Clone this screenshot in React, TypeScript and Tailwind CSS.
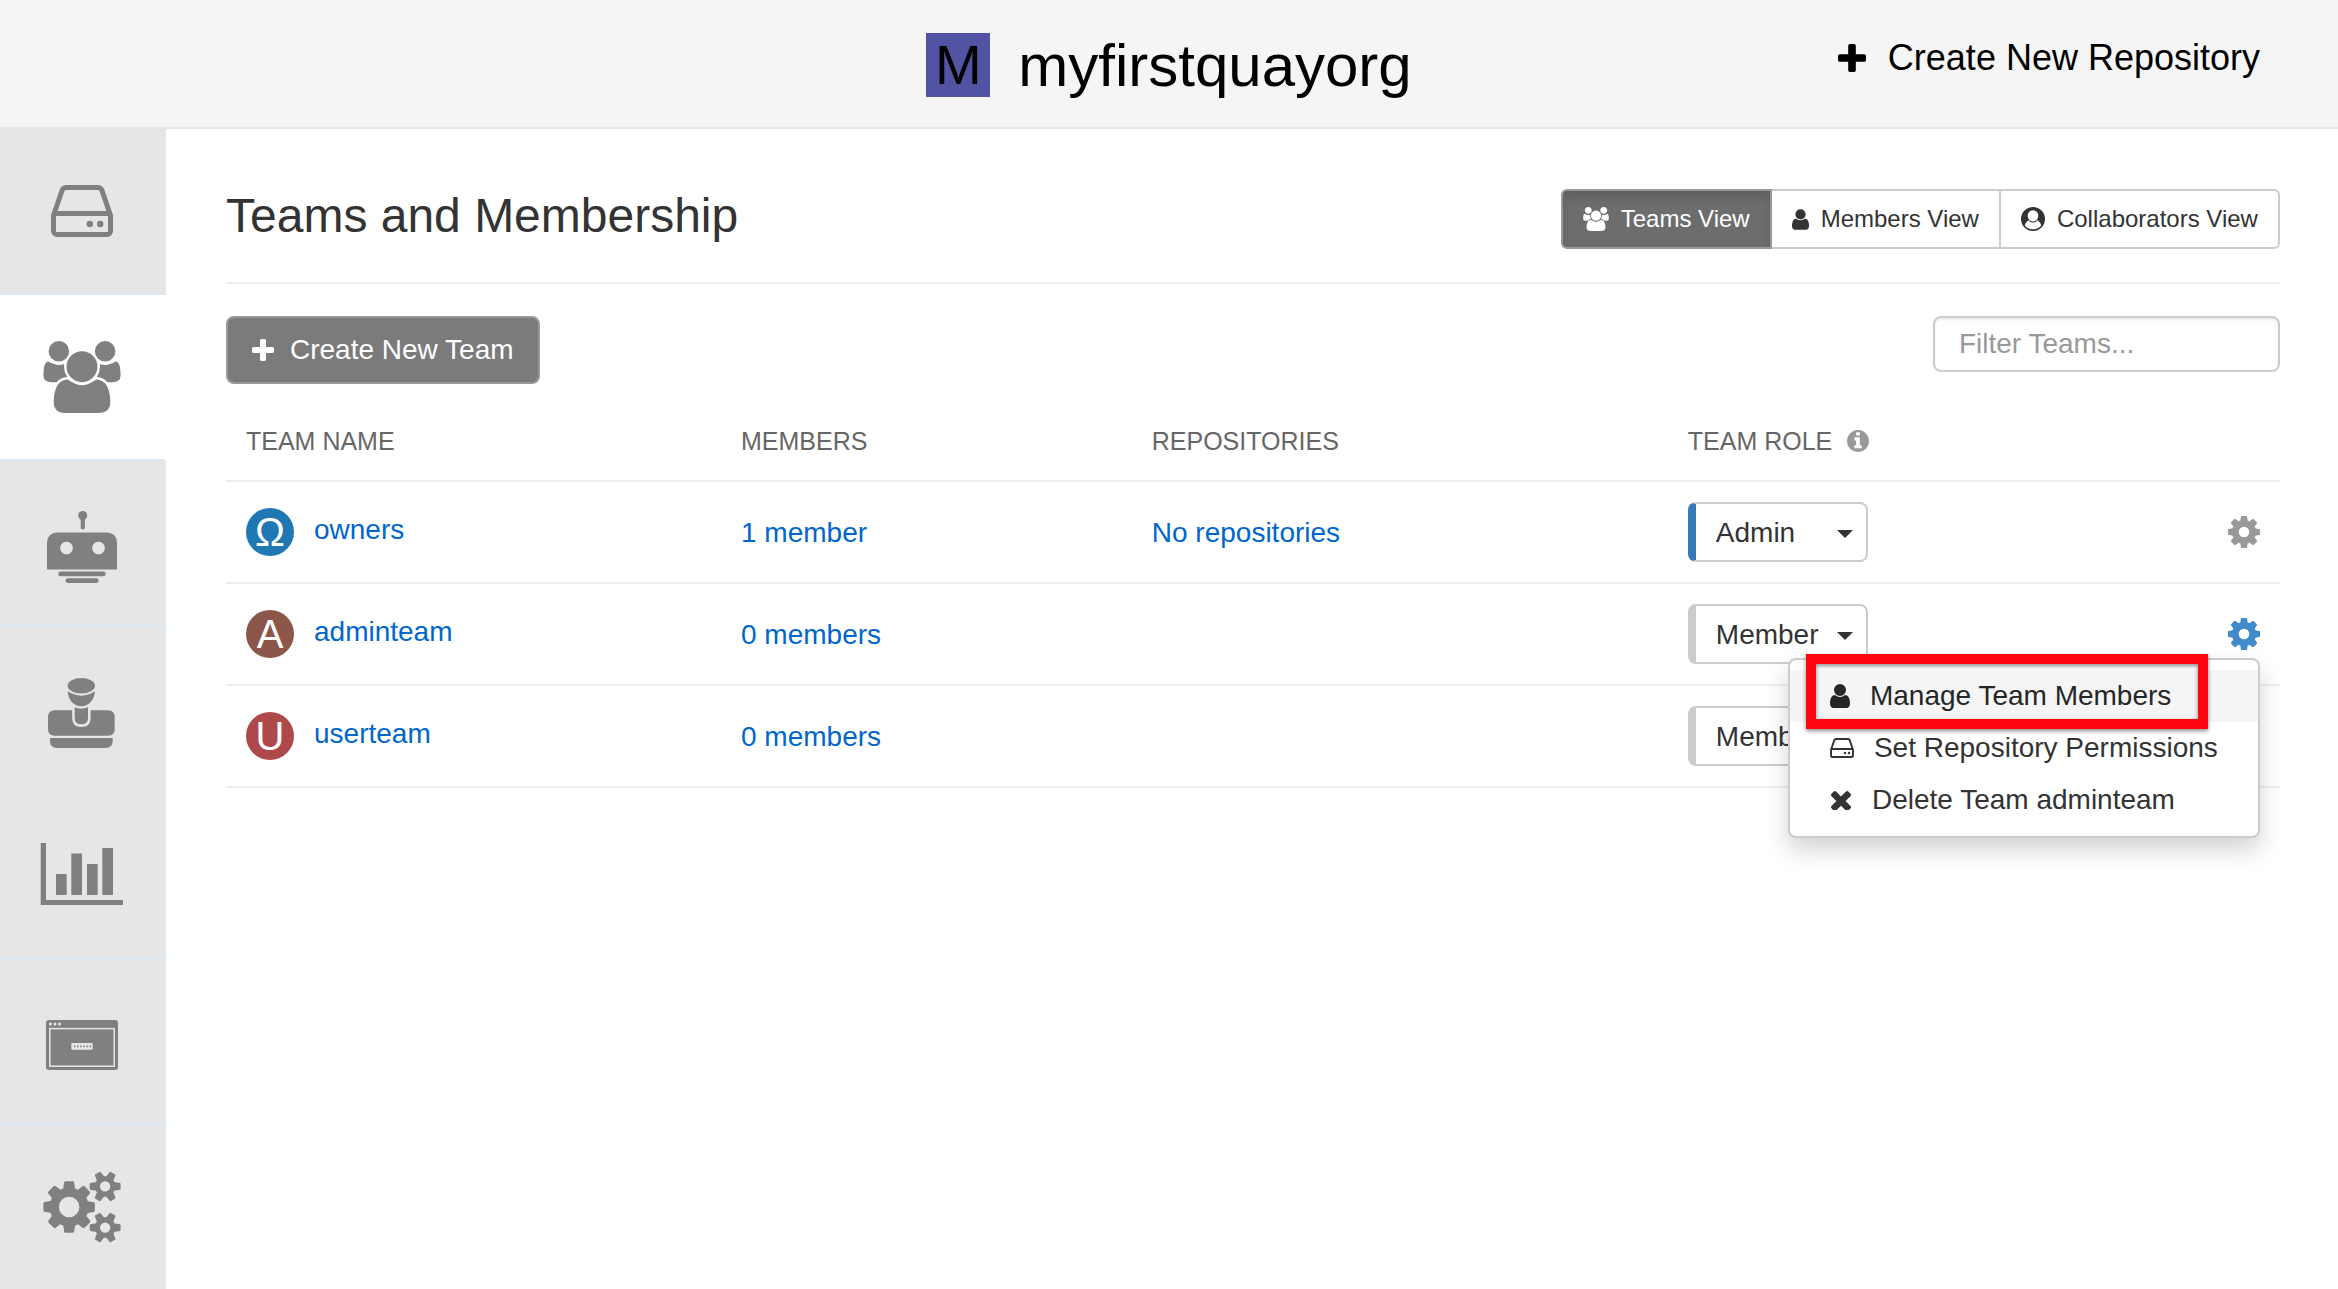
import React, { useState } from 'react';

interface IconProps {
  className?: string;
}

interface GlyphProps extends IconProps {
  viewBox: string;
  d: string;
}

const Glyph: React.FC<GlyphProps> = ({ viewBox, d, className }) => (
  <svg viewBox={viewBox} fill="currentColor" aria-hidden="true" className={className}>
    <path d={d} />
  </svg>
);

const PlusIcon: React.FC<IconProps> = ({ className }) => (
  <Glyph
    className={className}
    viewBox="192 128 1408 1408"
    d="M1600 736v192q0 40-28 68t-68 28h-416v416q0 40-28 68t-68 28h-192q-40 0-68-28t-28-68v-416h-416q-40 0-68-28t-28-68v-192q0-40 28-68t68-28h416v-416q0-40 28-68t68-28h192q40 0 68 28t28 68v416h416q40 0 68 28t28 68z"
  />
);

const GroupIcon: React.FC<IconProps> = ({ className }) => (
  <Glyph
    className={className}
    viewBox="-64 0 1920 1792"
    d="M529 896q-162 5-265 128h-134q-82 0-138-40.500t-56-118.500q0-353 124-353 6 0 43.500 21t97.500 42.500 119 21.500q67 0 133-23-5 37-5 66 0 139 81 256zm1071 637q0 120-73 189.500t-194 69.500h-874q-121 0-194-69.500t-73-189.500q0-53 3.500-103.500t14-109 26.500-108.500 43-97.500 62-81 85.500-53.500 111.500-20q10 0 43 21.500t73 48 107 48 135 21.500 135-21.500 107-48 73-48 43-21.500q61 0 111.500 20t85.500 53.500 62 81 43 97.500 26.500 108.500 14 109 3.500 103.500zm-1024-1277q0 106-75 181t-181 75-181-75-75-181 75-181 181-75 181 75 75 181zm704 384q0 159-112.500 271.500t-271.500 112.500-271.500-112.500-112.500-271.500 112.500-271.500 271.500-112.500 271.500 112.500 112.500 271.500zm576 225q0 78-56 118.500t-138 40.500h-134q-103-123-265-128 81-117 81-256 0-29-5-66 66 23 133 23 59 0 119-21.500t97.500-42.500 43.500-21q124 0 124 353zm-128-609q0 106-75 181t-181 75-181-75-75-181 75-181 181-75 181 75 75 181z"
  />
);

const UserIcon: React.FC<IconProps> = ({ className }) => (
  <Glyph
    className={className}
    viewBox="256 128 1280 1536"
    d="M1536 1399q0 109-62.500 187t-150.500 78h-854q-88 0-150.500-78t-62.500-187q0-85 8.500-160.500t31.500-152 58.500-131 94-89 134.500-34.500q131 128 313 128t313-128q76 0 134.500 34.500t94 89 58.500 131 31.500 152 8.500 160.500zm-256-887q0 159-112.500 271.500t-271.500 112.500-271.500-112.500-112.500-271.500 112.500-271.500 271.500-112.500 271.500 112.500 112.500 271.500z"
  />
);

const TimesIcon: React.FC<IconProps> = ({ className }) => (
  <Glyph
    className={className}
    viewBox="302 302 1188 1188"
    d="M1490 1322q0 40-28 68l-136 136q-28 28-68 28t-68-28l-294-294-294 294q-28 28-68 28t-68-28l-136-136q-28-28-28-68t28-68l294-294-294-294q-28-28-28-68t28-68l136-136q28-28 68-28t68 28l294 294 294-294q28-28 68-28t68 28l136 136q28 28 28 68t-28 68l-294 294 294 294q28 28 28 68z"
  />
);

const InfoIcon: React.FC<IconProps> = ({ className }) => (
  <Glyph
    className={className}
    viewBox="128 128 1536 1536"
    d="M1152 1376v-160q0-14-9-23t-23-9h-96v-512q0-14-9-23t-23-9h-320q-14 0-23 9t-9 23v160q0 14 9 23t23 9h96v320h-96q-14 0-23 9t-9 23v160q0 14 9 23t23 9h448q14 0 23-9t9-23zm-128-896v-160q0-14-9-23t-23-9h-192q-14 0-23 9t-9 23v160q0 14 9 23t23 9h192q14 0 23-9t9-23zm640 416q0 209-103 385.500t-279.500 279.500-385.500 103-385.500-103-279.500-279.500-103-385.500 103-385.500 279.500-279.500 385.500-103 385.500 103 279.500 279.500 103 385.500z"
  />
);

const GearIcon: React.FC<IconProps> = ({ className }) => (
  <Glyph
    className={className}
    viewBox="128 128 1536 1536"
    d="M1152 896q0-106-75-181t-181-75-181 75-75 181 75 181 181 75 181-75 75-181zm512-109v222q0 12-8 23t-20 13l-185 28q-19 54-39 91 35 50 107 138 10 12 10 25t-9 23q-27 37-99 108t-94 71q-12 0-26-9l-138-108q-44 23-91 38-16 136-29 186-7 28-36 28h-222q-14 0-24.500-8.500t-11.500-21.500l-28-184q-49-16-90-37l-141 107q-10 9-25 9-14 0-25-11-126-114-165-168-7-10-7-23 0-12 8-23 15-21 51-66.500t54-70.500q-27-50-41-99l-183-27q-13-2-21-12.500t-8-23.500v-222q0-12 8-23t19-13l186-28q14-46 39-92-40-57-107-138-10-12-10-24 0-10 9-23 26-36 98.500-107.500t94.500-71.500q13 0 26 10l138 107q44-23 91-38 16-136 29-186 7-28 36-28h222q14 0 24.500 8.500t11.500 21.500l28 184q49 16 90 37l142-107q9-9 24-9 13 0 25 10 129 119 165 170 7 8 7 22 0 12-8 23-15 21-51 66.500t-54 70.500q26 50 41 98l183 28q13 2 21 12.500t8 23.500z"
  />
);

const GearsIcon: React.FC<IconProps> = ({ className }) => (
  <Glyph
    className={className}
    viewBox="-64 0 1920 1792"
    d="M832 896q0-106-75-181t-181-75-181 75-75 181 75 181 181 75 181-75 75-181zm768 512q0-52-38-90t-90-38-90 38-38 90q0 53 37.500 90.500t90.500 37.500 90.500-37.500 37.500-90.500zm0-1024q0-52-38-90t-90-38-90 38-38 90q0 53 37.500 90.500t90.500 37.500 90.500-37.500 37.500-90.500zm-384 421v185q0 10-7 19.500t-16 10.500l-155 24q-11 35-32 76 34 48 90 115 7 11 7 20 0 12-7 19-23 30-82.500 89.500t-78.500 59.500q-11 0-21-7l-115-90q-37 19-77 31-11 108-23 155-7 24-30 24h-186q-11 0-20-7.500t-10-17.500l-23-153q-34-10-75-31l-118 89q-7 7-20 7-11 0-21-8-144-133-144-160 0-9 7-19 10-14 41-53t47-61q-23-44-35-82l-152-24q-10-1-17-9.500t-7-19.500v-185q0-10 7-19.500t16-10.500l155-24q11-35 32-76-34-48-90-115-7-11-7-20 0-12 7-20 22-30 82-89t79-59q11 0 21 7l115 90q34-18 77-32 11-108 23-154 7-24 30-24h186q11 0 20 7.500t10 17.500l23 153q34 10 75 31l118-89q8-7 20-7 11 0 21 8 144 133 144 160 0 8-7 19-12 16-42 54t-45 60q23 48 34 82l152 23q10 2 17 10.500t7 19.500zm640 533v140q0 16-149 31-12 27-30 52 51 113 51 138 0 4-4 7-122 71-124 71-8 0-46-47t-52-68q-20 2-30 2t-30-2q-14 21-52 68t-46 47q-2 0-124-71-4-3-4-7 0-25 51-138-18-25-30-52-149-15-149-31v-140q0-16 149-31 13-29 30-52-51-113-51-138 0-4 4-7 4-2 35-20t59-34 30-16q8 0 46 46.500t52 67.500q20-2 30-2t30 2q51-71 92-112l6-2q4 0 124 70 4 3 4 7 0 25-51 138 17 23 30 52 149 15 149 31zm0-1024v140q0 16-149 31-12 27-30 52 51 113 51 138 0 4-4 7-122 71-124 71-8 0-46-47t-52-68q-20 2-30 2t-30-2q-14 21-52 68t-46 47q-2 0-124-71-4-3-4-7 0-25 51-138-18-25-30-52-149-15-149-31v-140q0-16 149-31 13-29 30-52-51-113-51-138 0-4 4-7 4-2 35-20t59-34 30-16q8 0 46 46.500t52 67.500q20-2 30-2t30 2q51-71 92-112l6-2q4 0 124 70 4 3 4 7 0 25-51 138 17 23 30 52 149 15 149 31z"
  />
);

const DriveIcon: React.FC<IconProps> = ({ className }) => (
  <svg viewBox="0 0 62 52" aria-hidden="true" className={className}>
    <path
      d="M2.500 30.500 11 5.500Q12 2.500 15.500 2.500H46.500Q50 2.500 51 5.500L59.500 30.500V46a3.500 3.500 0 0 1-3.500 3.500H6A3.500 3.500 0 0 1 2.500 46ZM3 28.500H59"
      fill="none"
      stroke="currentColor"
      strokeWidth="5"
      strokeLinejoin="round"
    />
    <circle cx="38.800" cy="39" r="3.200" fill="currentColor" />
    <circle cx="49.200" cy="39" r="3.200" fill="currentColor" />
  </svg>
);

const UserCircleIcon: React.FC<IconProps> = ({ className }) => (
  <svg viewBox="0 0 24 24" aria-hidden="true" className={className}>
    <circle cx="12" cy="12" r="12" fill="currentColor" />
    <path
      d="M12 3.200a5.300 5.300 0 0 1 5.300 5.400c0 2-.8 3.700-2 4.700 2.500.4 4.300 2.300 4.900 5.200A10.300 10.300 0 0 1 12 22.300a10.300 10.300 0 0 1-8.200-3.800c.6-2.900 2.400-4.800 4.900-5.200-1.200-1-2-2.700-2-4.700A5.300 5.300 0 0 1 12 3.200Z"
      fill="#fff"
    />
    <path d="M8.500 13.700q3.500 2.600 7 0" fill="none" stroke="currentColor" strokeWidth="1.200" />
  </svg>
);

const RobotIcon: React.FC<IconProps> = ({ className }) => (
  <svg viewBox="0 0 84 80" fill="currentColor" aria-hidden="true" className={className}>
    <circle cx="42.700" cy="12.500" r="4.500" />
    <rect x="40.700" y="13" width="4.200" height="13.500" rx="2" />
    <path
      fillRule="evenodd"
      d="M7 66.500V39a9.500 9.500 0 0 1 9.500-9.500h51A9.500 9.500 0 0 1 77 39v27.500ZM26.500 38.700a6.300 6.300 0 1 0 .01 0ZM58.500 38.700a6.300 6.300 0 1 0 .01 0Z"
    />
    <rect x="18.300" y="68.600" width="47.400" height="4.700" rx="2.300" />
    <rect x="25.500" y="75.200" width="33.200" height="4.700" rx="2.300" />
  </svg>
);

const StampIcon: React.FC<IconProps> = ({ className }) => (
  <svg viewBox="0 0 84 80" fill="currentColor" aria-hidden="true" className={className}>
    <ellipse cx="41.300" cy="16.700" rx="13.700" ry="7.700" />
    <path d="M27.700 22.300Q41.300 31 55 22.300C54.500 30 49.500 37.300 41.300 37.300S28 30 27.700 22.300Z" />
    <path d="M34.700 38.300Q41.300 41 48 38.300V49q0 6.300-6.700 6.300T34.700 49Z" />
    <path d="M14 41.300H32.200V49q0 9 9.200 9t9.200-9V41.300H68.700a6 6 0 0 1 6 6V60.700a6 6 0 0 1-6 6H14a6 6 0 0 1-6-6V47.300a6 6 0 0 1 6-6Z" />
    <path d="M10 69H72.700v3q0 7-7 7H17q-7 0-7-7Z" />
  </svg>
);

const ChartIcon: React.FC<IconProps> = ({ className }) => (
  <svg viewBox="0 0 84 80" fill="currentColor" aria-hidden="true" className={className}>
    <path d="M.7 8H6V65H83v5H.7Z" />
    <path d="M16 39h10.700v21H16ZM31.300 18.500H42V60H31.300ZM47 29h10.700v31H47ZM62.300 13H73v47H62.300Z" />
  </svg>
);

const ConsoleIcon: React.FC<IconProps> = ({ className }) => (
  <svg viewBox="0 0 84 80" aria-hidden="true" className={className}>
    <rect x="6" y="19" width="72" height="50" rx="3" fill="currentColor" />
    <g fill="#e6e6e6">
      <circle cx="10.400" cy="23" r="1.500" />
      <circle cx="15" cy="23" r="1.500" />
      <circle cx="19.500" cy="23" r="1.500" />
      <rect x="31.300" y="42" width="21.400" height="6.800" rx="1" />
    </g>
    <rect x="9.800" y="27.600" width="64.400" height="37.600" fill="none" stroke="#e6e6e6" strokeWidth="1.500" />
    <path d="M34 45.400H51" stroke="currentColor" strokeWidth="1.600" strokeDasharray="1.500 1.600" />
  </svg>
);

const NAV_ITEMS = [
  { label: 'Repositories', icon: <DriveIcon className="h-[52px] w-[62px]" /> },
  { label: 'Teams and Membership', icon: <GroupIcon className="h-[72px] w-[78px]" />, active: true },
  { label: 'Robot Accounts', icon: <RobotIcon className="h-[80px] w-[84px]" /> },
  { label: 'Default Permissions', icon: <StampIcon className="h-[80px] w-[84px]" /> },
  { label: 'Usage Logs', icon: <ChartIcon className="h-[80px] w-[84px]" /> },
  { label: 'OAuth Applications', icon: <ConsoleIcon className="h-[80px] w-[84px]" /> },
  { label: 'Organization Settings', icon: <GearsIcon className="h-[72px] w-[78px]" /> },
];

const TEAMS = [
  { name: 'owners', letter: 'Ω', color: 'bg-[#1f77b4]', members: '1 member', repos: 'No repositories', role: 'Admin' },
  { name: 'adminteam', letter: 'A', color: 'bg-[#8c564b]', members: '0 members', repos: '', role: 'Member', menuOpen: true },
  { name: 'userteam', letter: 'U', color: 'bg-[#ad494a]', members: '0 members', repos: '', role: 'Member' },
];

const Header: React.FC = () => (
  <header className="grid grid-cols-[1fr_auto_1fr] border-b-2 border-[#e6e6e6] bg-[#f5f5f5] pt-[33px] pb-[30px] text-black">
    <h1 className="col-start-2 flex items-center gap-[28px] text-[60px] leading-[64px]">
      <span className="flex size-[64px] items-center justify-center bg-[#5254a3] text-[56px]">M</span>
      <span className="pt-[2px] leading-[62px]">myfirstquayorg</span>
    </h1>
    <a href="#new-repository" className="mr-[78px] flex items-center gap-[22px] self-start justify-self-end text-[36px] leading-[50px]">
      <PlusIcon className="size-[28px]" />
      Create New Repository
    </a>
  </header>
);

const Sidebar: React.FC = () => (
  <nav className="w-[166px] shrink-0 bg-[#e6e6e6]">
    {NAV_ITEMS.map((item) => (
      <a
        key={item.label}
        href="#"
        aria-label={item.label}
        className={
          item.active
            ? 'flex h-[166px] items-center justify-center border-r-2 border-b-2 border-r-white border-b-[#dde7ef] bg-white text-[#808080]'
            : 'flex h-[166px] items-center justify-center border-r-2 border-b-2 border-[#dde7ef] text-[#808080] last:h-[164px] last:border-b-0'
        }
      >
        {item.icon}
      </a>
    ))}
  </nav>
);

const ViewSwitcher: React.FC = () => (
  <div className="flex text-[24px] leading-[56px]">
    <button className="flex items-center gap-[12px] rounded-l-[6px] border-2 border-[#999] bg-[#6d6d6d] px-[20px] text-white shadow-[inset_0_6px_10px_rgba(0,0,0,0.125)]">
      <GroupIcon className="h-[24px] w-[26px]" />
      Teams View
    </button>
    <button className="flex items-center gap-[12px] border-y-2 border-[#ccc] bg-white px-[20px]">
      <UserIcon className="h-[21px] w-[17px]" />
      Members View
    </button>
    <button className="flex items-center gap-[12px] rounded-r-[6px] border-2 border-[#ccc] bg-white px-[20px]">
      <UserCircleIcon className="size-[24px]" />
      Collaborators View
    </button>
  </div>
);

const RoleSelect: React.FC<{ team: string; initial: string }> = ({ team, initial }) => {
  const [role, setRole] = useState(initial);
  return (
    <div className="relative w-[180px]">
      <select
        aria-label={`Role for ${team}`}
        value={role}
        onChange={(e) => setRole(e.target.value)}
        className={
          role === 'Admin'
            ? 'block h-[60px] w-full appearance-none rounded-[8px] border-2 border-l-8 border-[#ccc] border-l-[#337ab7] bg-white pt-[2px] pl-[20px]'
            : 'block h-[60px] w-full appearance-none rounded-[8px] border-2 border-l-8 border-[#ccc] bg-white pt-[2px] pl-[20px]'
        }
      >
        <option>Admin</option>
        <option>Creator</option>
        <option>Member</option>
      </select>
      <svg viewBox="0 0 16 8" aria-hidden="true" className="pointer-events-none absolute top-[28px] right-[15px] h-[8px] w-[16px]">
        <path d="M0 0h16L8 8Z" fill="currentColor" />
      </svg>
    </div>
  );
};

const TeamMenu: React.FC<{ team: string }> = ({ team }) => (
  <div className="absolute top-[40px] right-0 z-10 w-[472px] rounded-[8px] border-2 border-[#ccc] bg-white bg-clip-padding py-[10px] text-left leading-[52px] shadow-[0_12px_24px_rgba(0,0,0,0.175)]">
    <a href="#members" className="flex items-center gap-[20px] bg-[#f5f5f5] pl-[40px] text-[#262626]">
      <UserIcon className="h-[24px] w-[20px]" />
      Manage Team Members
    </a>
    <a href="#permissions" className="flex items-center gap-[20px] pl-[40px]">
      <DriveIcon className="h-[20px] w-[24px]" />
      Set Repository Permissions
    </a>
    <a href="#delete" className="flex items-center gap-[20px] pl-[40px]">
      <TimesIcon className="mx-px size-[20px]" />
      Delete Team {team}
    </a>
    <div className="pointer-events-none absolute -top-[6px] left-[16px] h-[75px] w-[402px] border-10 border-[#ff0710] shadow-[0_2px_4px_rgba(0,0,0,0.45),inset_0_2px_4px_rgba(0,0,0,0.45)]" />
  </div>
);

const TeamsTable: React.FC = () => (
  <table className="mt-[18px] w-full table-fixed border-separate border-spacing-0 text-left">
    <thead>
      <tr className="text-[25px] text-[#666] [&>th]:h-[80px] [&>th]:border-b-2 [&>th]:border-[#eee] [&>th]:px-[20px] [&>th]:font-normal">
        <th className="w-[24.1%]">TEAM NAME</th>
        <th className="w-[20%]">MEMBERS</th>
        <th className="w-[26.1%]">REPOSITORIES</th>
        <th>
          <span className="flex items-center gap-[15px]">
            TEAM ROLE
            <InfoIcon className="size-[22px] text-[#999]" />
          </span>
        </th>
        <th className="w-[100px]" aria-label="Options" />
      </tr>
    </thead>
    <tbody>
      {TEAMS.map((team) => (
        <tr key={team.name} className="[&>td]:h-[102px] [&>td]:border-b-2 [&>td]:border-[#eee] [&>td]:px-[20px]">
          <td>
            <div className="flex items-center gap-[20px]">
              <span className={`flex size-[48px] items-center justify-center rounded-full text-[40px] leading-[48px] text-white ${team.color}`}>
                {team.letter}
              </span>
              <a href="#" className="pb-[4px] text-[#0066cc]">{team.name}</a>
            </div>
          </td>
          <td><a href="#" className="block pt-[2px] text-[#0066cc]">{team.members}</a></td>
          <td>{team.repos && <a href="#" className="block pt-[2px] text-[#0066cc]">{team.repos}</a>}</td>
          <td><RoleSelect team={team.name} initial={team.role} /></td>
          <td>
            <div className="relative flex justify-end">
              <button aria-label={`Options for ${team.name}`} className={team.menuOpen ? 'text-[#428bca]' : 'text-[#999]'}>
                <GearIcon className="size-[32px]" />
              </button>
              {team.menuOpen && <TeamMenu team={team.name} />}
            </div>
          </td>
        </tr>
      ))}
    </tbody>
  </table>
);

const App: React.FC = () => (
  <div className="flex min-h-screen flex-col bg-white font-['Liberation_Sans',Arial,sans-serif] text-[28px] leading-[40px] text-[#333]">
    <Header />
    <div className="flex grow">
      <Sidebar />
      <main className="min-w-0 grow pt-[60px] pr-[58px] pl-[60px]">
        <div className="flex items-start justify-between border-b-2 border-[#eee] pb-[33px]">
          <h2 className="text-[48px] leading-[54px]">Teams and Membership</h2>
          <ViewSwitcher />
        </div>
        <div className="flex items-start justify-between pt-[32px]">
          <button className="flex h-[68px] items-center gap-[16px] rounded-[8px] border-2 border-[#999] bg-[#7b7b7b] px-[24px] text-white">
            <PlusIcon className="size-[22px]" />
            Create New Team
          </button>
          <input
            type="text"
            aria-label="Filter Teams"
            placeholder="Filter Teams..."
            className="h-[56px] w-[347px] rounded-[8px] border-2 border-[#ccc] px-[24px] shadow-[inset_0_2px_2px_rgba(0,0,0,0.075)] placeholder:text-[#999]"
          />
        </div>
        <TeamsTable />
      </main>
    </div>
  </div>
);

export default App;
